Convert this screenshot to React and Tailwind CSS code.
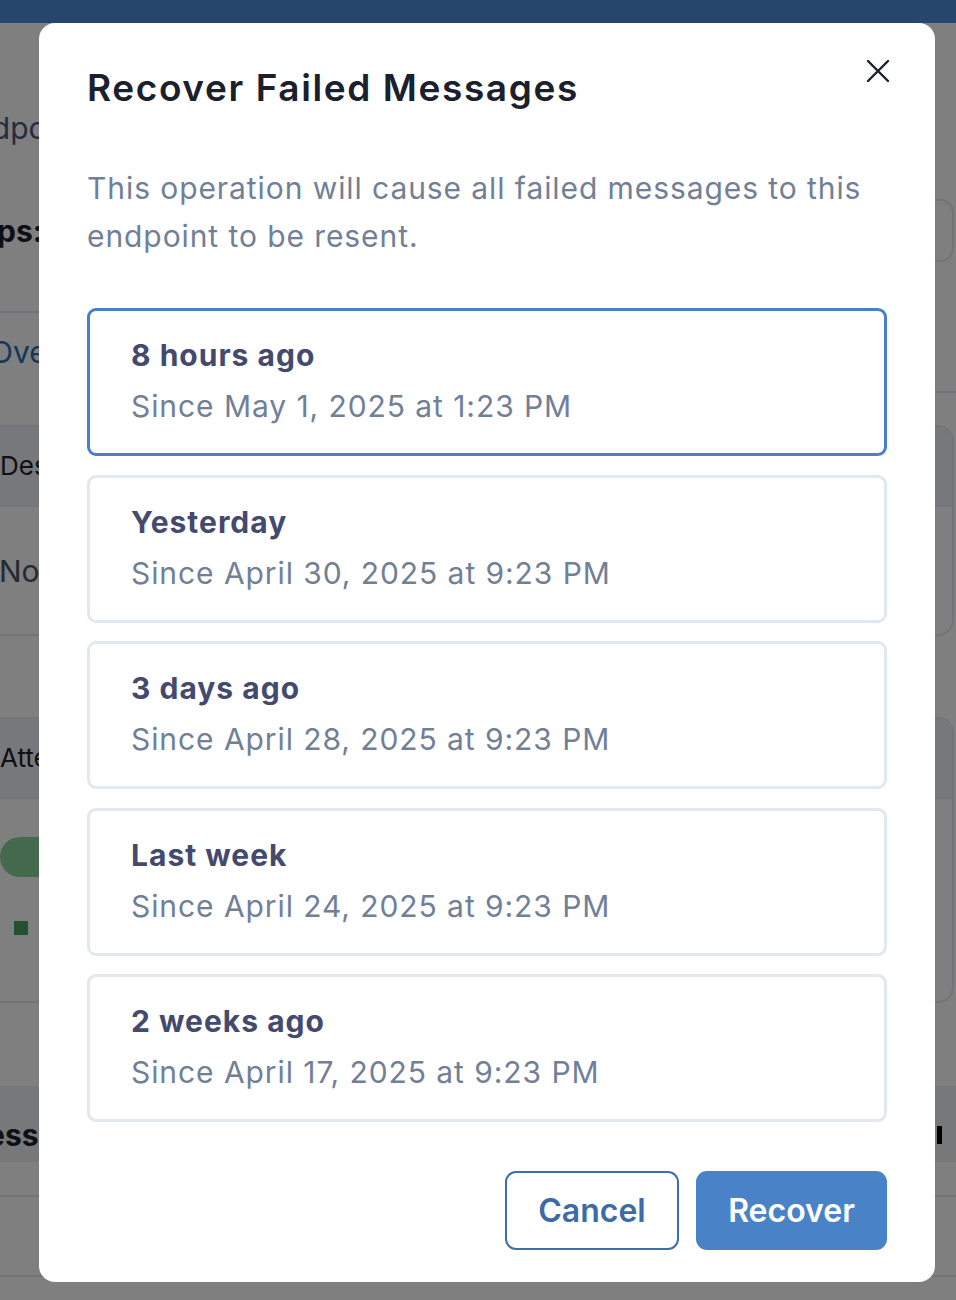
import React from "react";

const options = [
  { title: "8 hours ago", sub: "Since May 1, 2025 at 1:23 PM", selected: true },
  { title: "Yesterday", sub: "Since April 30, 2025 at 9:23 PM" },
  { title: "3 days ago", sub: "Since April 28, 2025 at 9:23 PM" },
  { title: "Last week", sub: "Since April 24, 2025 at 9:23 PM" },
  { title: "2 weeks ago", sub: "Since April 17, 2025 at 9:23 PM" },
];

function Background() {
  return (
    <div className="w-[956px] h-[1300px] overflow-hidden bg-white flex flex-col text-[30px] leading-[40px]">
      <div className="h-[23px] shrink-0 bg-[#4e8cd8]" />
      <div className="h-[176px] shrink-0 flex items-start">
        <span className="ml-[-44px] mt-[85px] text-[#4a5a80] whitespace-nowrap">Endpoint details</span>
      </div>
      <div className="h-[63px] shrink-0 flex items-center justify-between">
        <span className="ml-[-74px] font-bold text-[#1a202c] whitespace-nowrap">Groups:</span>
        <div className="w-[400px] h-[63px] mr-[2px] rounded-[14px] border-2 border-[#e8e8ea]" />
      </div>
      <div className="h-[49px] shrink-0" />
      <div className="h-[82px] shrink-0 flex flex-col">
        <div className="w-[400px] h-[2px] bg-[#e2e8f0]" />
        <div className="flex-1 flex items-center justify-between">
          <span className="ml-[-10px] text-[#2f6fb3] whitespace-nowrap">Overview</span>
        </div>
        <div className="ml-auto w-[400px] h-[2px] bg-[#e2e8f0]" />
      </div>
      <div className="h-[32px] shrink-0" />
      <div className="h-[211px] shrink-0 ml-[-40px] mr-[2px] rounded-[16px] border-2 border-[#e2e8f0] flex flex-col overflow-hidden">
        <div className="h-[80px] bg-[#eef0f3] border-b-2 border-[#e2e8f0] flex items-center">
          <span className="ml-[38px] text-[26px] text-[#1a202c] whitespace-nowrap">Description</span>
        </div>
        <div className="flex-1 flex items-center">
          <span className="ml-[37px] text-[#4a5568] whitespace-nowrap">No description</span>
        </div>
      </div>
      <div className="h-[81px] shrink-0" />
      <div className="h-[286px] shrink-0 ml-[-40px] mr-[2px] rounded-[16px] border-2 border-[#e2e8f0] flex flex-col overflow-hidden">
        <div className="h-[80px] bg-[#eef0f3] border-b-2 border-[#e2e8f0] flex items-center">
          <span className="ml-[38px] text-[26px] text-[#1a202c] whitespace-nowrap">Attempts</span>
        </div>
        <div className="flex-1 flex flex-col">
          <div className="mt-[38px] ml-[38px] w-[72px] h-[40px] rounded-full bg-[#86d49a]" />
          <div className="mt-[44px] ml-[52px] w-[14px] h-[14px] bg-[#46a35e]" />
        </div>
      </div>
      <div className="h-[83px] shrink-0" />
      <div className="h-[76px] shrink-0 bg-[#eef0f3] flex items-center justify-between">
        <span className="ml-[-84px] font-bold text-[#1a202c] mt-[22px] whitespace-nowrap">Address</span>
        <div className="mr-[14px] mt-[22px] w-[5px] h-[18px] bg-black" />
      </div>
      <div className="h-[35px] shrink-0 border-b-2 border-[#e2e8f0]" />
      <div className="h-[80px] shrink-0 border-b-2 border-[#e2e8f0]" />
    </div>
  );
}

export default function App() {
  return (
    <div className="relative w-[956px] h-[1300px] overflow-hidden" style={{ fontFamily: "Inter, 'Noto Sans', sans-serif" }}>
      <Background />
      <div className="absolute inset-0 bg-black/50" />
      <div className="absolute left-[39px] top-[23px] w-[896px] h-[1259px] bg-white rounded-[16px] px-[48px] pt-[41px] pb-[32px] flex flex-col">
        <button className="absolute right-[45px] top-[36px] w-[24px] h-[24px] text-[#1a202c]">
          <svg viewBox="0 0 24 24" width="24" height="24" fill="none" stroke="currentColor" strokeWidth="2.4" strokeLinecap="round">
            <path d="M2 2L22 22M22 2L2 22" />
          </svg>
        </button>
        <h2 className="text-[37px] leading-[48px] font-semibold tracking-[1.6px] text-[#1a202c]">Recover Failed Messages</h2>
        <p className="mt-[52px] text-[30px] leading-[48px] tracking-[0.92px] text-[#718096]">
          This operation will cause all failed messages to this endpoint to be resent.
        </p>
        <div className="mt-[48px] flex flex-col gap-[18.5px]">
          {options.map((o) => (
            <div
              key={o.title}
              className={
                o.selected
                  ? "h-[148px] rounded-[9px] border-[3px] border-[#4a80c6] pl-[41px] pt-[24px]"
                  : "h-[148px] rounded-[9px] border-[3px] border-[#e2e8f0] pl-[41px] pt-[24px]"
              }
            >
              <div className="text-[30px] leading-[40px] font-bold tracking-[1px] text-[#434a6e]">{o.title}</div>
              <div className="mt-[11px] text-[30px] leading-[40px] tracking-[0.93px] text-[#718096]">{o.sub}</div>
            </div>
          ))}
        </div>
        <div className="mt-auto flex justify-end gap-[17px]">
          <button className="w-[174px] h-[79px] rounded-[11px] border-2 border-[#3d6fae] text-[#3b6ca8] text-[32px] font-semibold">
            Cancel
          </button>
          <button className="w-[191px] h-[79px] rounded-[11px] bg-[#4a82c8] text-white text-[32px] font-semibold">
            Recover
          </button>
        </div>
      </div>
    </div>
  );
}
